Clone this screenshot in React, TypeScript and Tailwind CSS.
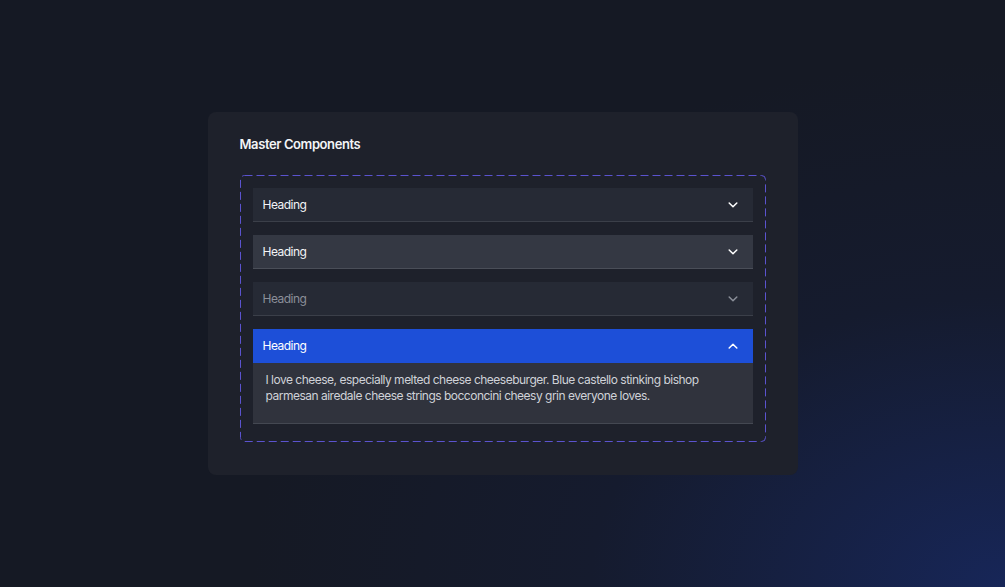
import type { ReactNode } from 'react';

type ItemProps = {
  label: string;
  variant?: 'default' | 'hover' | 'disabled' | 'open';
  children?: ReactNode;
};

function Chevron({ up, className }: { up?: boolean; className?: string }) {
  return (
    <svg width="10" height="6" viewBox="0 0 10 6" fill="none" className={className}>
      <path
        d={up ? 'M1.2 5L5 1.2L8.8 5' : 'M1.2 1L5 4.8L8.8 1'}
        stroke="currentColor"
        strokeWidth="1.5"
        strokeLinecap="round"
        strokeLinejoin="round"
      />
    </svg>
  );
}

function AccordionItem({ label, variant = 'default', children }: ItemProps) {
  const head =
    variant === 'open'
      ? 'bg-[#1d4fd8] text-white'
      : variant === 'hover'
        ? 'bg-[#343843] text-[#f3f4f6] border-b border-[#4a4e58]'
        : variant === 'disabled'
          ? 'bg-[#262a35] text-[#8b8f99] border-b border-[#3b3f49]'
          : 'bg-[#262a35] text-[#f3f4f6] border-b border-[#3b3f49]';

  return (
    <div>
      <div
        className={`flex h-[34px] items-center justify-between pl-[10px] pr-[15px] text-[12px] tracking-[-0.5px] ${head}`}
      >
        <span>{label}</span>
        <Chevron up={variant === 'open'} className={variant === 'disabled' ? 'text-[#8b8f99]' : 'text-white'} />
      </div>
      {children && (
        <div className="border-b border-[#444852] bg-[#30333d] px-[13px] pt-[9px] pb-[19px] text-[12px] leading-[16px] tracking-[-0.5px] text-[#cfd2d8]">
          {children}
        </div>
      )}
    </div>
  );
}

export default function App() {
  return (
    <div
      className="flex min-h-[587px] w-full items-center justify-center bg-[#151924] bg-[radial-gradient(ellipse_75%_90%_at_100%_100%,#172658_0%,#151b2e_55%,#151924_100%)]"
      style={{ fontFamily: 'Inter, "Noto Sans", sans-serif' }}
    >
      <div className="w-[590px] rounded-[8px] bg-[#1e212b] px-8 pt-[22px] pb-[33px]">
        <h2 className="text-[13px] leading-[20px] font-semibold tracking-[-0.4px] text-[#f3f4f6]">Master Components</h2>
        <div className="relative mt-[21px] px-[13px] pt-[13px] pb-[18px]">
          <svg className="pointer-events-none absolute inset-0 h-full w-full" preserveAspectRatio="none">
            <rect
              x="0.5"
              y="0.5"
              width="calc(100% - 1px)"
              height="calc(100% - 1px)"
              rx="4"
              fill="none"
              stroke="#5b53cf"
              strokeWidth="1"
              strokeDasharray="8 4"
            />
          </svg>
          <div className="flex flex-col gap-[13px]">
            <AccordionItem label="Heading" />
            <AccordionItem label="Heading" variant="hover" />
            <AccordionItem label="Heading" variant="disabled" />
            <AccordionItem label="Heading" variant="open">
              I love cheese, especially melted cheese cheeseburger. Blue castello stinking bishop parmesan airedale
              cheese strings bocconcini cheesy grin everyone loves.
            </AccordionItem>
          </div>
        </div>
      </div>
    </div>
  );
}
